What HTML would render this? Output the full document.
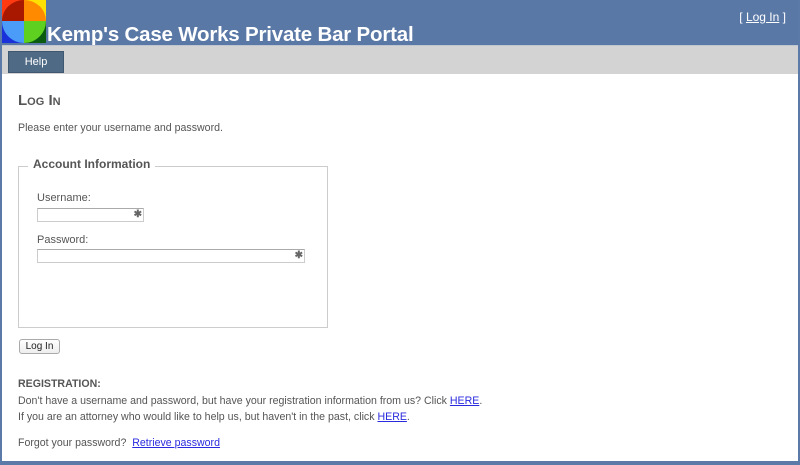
<!DOCTYPE html>
<html><head><meta charset="utf-8"><style>
*{margin:0;padding:0;box-sizing:border-box}
body{width:800px;height:465px;background:#5b7aa7;font-family:"Liberation Sans",Arial,sans-serif;overflow:hidden;position:relative}
#page{position:absolute;left:2px;top:0;width:796px;height:461px;background:#fff}
#hdr{position:absolute;left:0;top:0;width:796px;height:45px;background:#5a78a6}
#title{position:absolute;left:45px;top:23px;color:#fff;font-weight:bold;font-size:20.5px;letter-spacing:-0.2px}
#login{position:absolute;right:12px;top:10px;color:#fff;font-size:12px}
#login u{color:#fff}
#nav{position:absolute;left:0;top:45px;width:796px;height:29px;background:#d3d3d3;border-top:1px solid #c0c6cf}
#help{position:absolute;left:6px;top:5px;width:56px;height:22px;background:#4f6a85;border:1px solid #3f5770;color:#fff;font-size:11px;text-align:center;line-height:20px}
.t{position:absolute;color:#555;font-size:10.6px}
h2{position:absolute;left:16px;top:92px;color:#555;font-size:15px;font-weight:bold;font-variant:small-caps}
fieldset{position:absolute;left:16px;top:166px;width:310px;height:162px;border:1px solid #ccc}
.leg{position:absolute;left:26px;top:157px;background:#fff;padding:0 5px;color:#555;font-weight:bold;font-size:12px}
.in{position:absolute;height:14px;border:1px solid #ccc;border-top-color:#aaa;background:#fff}
.key{position:absolute;right:1px;top:0px;color:#666;font-size:10px;font-weight:bold}
.btn{position:absolute;left:17px;top:339px;width:41px;height:15px;border:1px solid #aaa;border-radius:3px;background:linear-gradient(#fff,#eee);font-size:10px;color:#222;text-align:center;line-height:13px}
a{color:#2a2adf}
</style></head><body>
<div id="page">
<div id="hdr">
<svg width="44" height="43" style="position:absolute;left:0;top:0" viewBox="0 0 44 43">
<rect x="0" y="0" width="22" height="21" fill="#a81800"/>
<path d="M0 21 A22 21 0 0 1 22 0 L0 0Z" fill="#ff3a10"/>
<rect x="22" y="0" width="22" height="21" fill="#ffe000"/>
<path d="M22 21 L22 0 A22 21 0 0 1 44 21Z" fill="#ff8a00"/>
<rect x="0" y="21" width="22" height="22" fill="#1a30d8"/>
<path d="M0 21 L22 21 L22 43 A22 22 0 0 1 0 21Z" fill="#4a9cf8"/>
<rect x="22" y="21" width="22" height="22" fill="#0a5a10"/>
<path d="M22 43 L22 21 L44 21 A22 22 0 0 1 22 43Z" fill="#5ed020"/>
</svg>
<div id="title">Kemp's Case Works Private Bar Portal</div>
<div id="login">[ <u>Log In</u> ]</div>
</div>
<div id="nav"><div id="help">Help</div></div>
<h2>Log In</h2>
<div class="t" style="left:16px;top:122px">Please enter your username and password.</div>
<fieldset></fieldset>
<div class="leg">Account Information</div>
<div class="t" style="left:35px;top:192px;font-size:11px">Username:</div>
<div class="in" style="left:35px;top:208px;width:107px"><span class="key">✱</span></div>
<div class="t" style="left:35px;top:234px;font-size:11px">Password:</div>
<div class="in" style="left:35px;top:249px;width:268px"><span class="key">✱</span></div>
<div class="btn">Log In</div>
<div class="t" style="left:16px;top:378px;font-weight:bold">REGISTRATION:</div>
<div class="t" style="left:16px;top:395px">Don't have a username and password, but have your registration information from us? Click <a href="#">HERE</a>.</div>
<div class="t" style="left:16px;top:411px">If you are an attorney who would like to help us, but haven't in the past, click <a href="#">HERE</a>.</div>
<div class="t" style="left:16px;top:437px">Forgot your password?&nbsp; <a href="#">Retrieve password</a></div>
</div>
</body></html>
